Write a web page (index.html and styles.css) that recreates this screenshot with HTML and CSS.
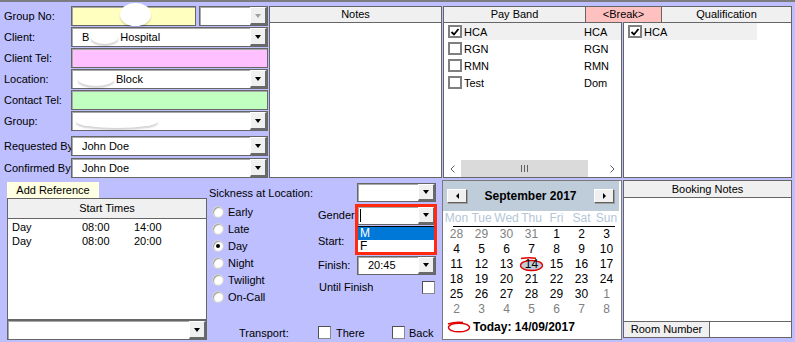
FILE: index.html
```html
<!DOCTYPE html>
<html>
<head>
<meta charset="utf-8">
<link rel="stylesheet" href="styles.css">
</head>
<body>
<div class="win">
  <div class="top">
    <div class="form">
      <div class="frow"><span class="lbl">Group No:</span><div class="field yellow"><span class="blob b1"></span></div><div class="field combo small"><span class="arrow dis"></span></div></div>
      <div class="frow"><span class="lbl">Client:</span><div class="field combo">B<span class="iblob w27"></span>Hospital<span class="arrow"></span></div></div>
      <div class="frow"><span class="lbl">Client Tel:</span><div class="field pink"></div></div>
      <div class="frow"><span class="lbl">Location:</span><div class="field combo"><span class="iblob w36 ml"></span>Block<span class="arrow"></span></div></div>
      <div class="frow"><span class="lbl">Contact Tel:</span><div class="field green"></div></div>
      <div class="frow gap"><span class="lbl">Group:</span><div class="field combo"><span class="iblob w82 ml2"></span><span class="arrow"></span></div></div>
      <div class="frow gap2"><span class="lbl">Requested By</span><div class="field combo">John Doe<span class="arrow"></span></div></div>
      <div class="frow"><span class="lbl">Confirmed By:</span><div class="field combo">John Doe<span class="arrow"></span></div></div>
    </div>
    <div class="panel notes"><div class="ph">Notes</div><div class="pb"></div></div>
    <div class="bands">
      <div class="bhead"><div class="hc pay">Pay Band</div><div class="hc brk">&lt;Break&gt;</div><div class="hc qual">Qualification</div></div>
      <div class="blists">
        <div class="plist">
          <div class="it"><span class="cb on"><svg width="10" height="10" viewBox="0 0 10 10"><path d="M1.5 5 L4 7.5 L8.5 2" fill="none" stroke="#000" stroke-width="1.8"/></svg></span><span class="itx sel"><span class="c1">HCA</span><span>HCA</span></span></div>
          <div class="it"><span class="cb"></span><span class="itx"><span class="c1">RGN</span><span>RGN</span></span></div>
          <div class="it"><span class="cb"></span><span class="itx"><span class="c1">RMN</span><span>RMN</span></span></div>
          <div class="it"><span class="cb"></span><span class="itx"><span class="c1">Test</span><span>Dom</span></span></div>
          <div class="sbar">
            <span class="sbtn"><svg width="5" height="8" viewBox="0 0 5 8"><path d="M4.5 0.5 L1 4 L4.5 7.5" fill="none" stroke="#606060" stroke-width="1"/></svg></span>
            <span class="thumb"><svg width="7" height="7" viewBox="0 0 7 7"><path d="M0.5 0 V7 M3.5 0 V7 M6.5 0 V7" stroke="#606060" stroke-width="1"/></svg></span>
            <span class="track"></span>
            <span class="sbtn"><svg width="5" height="8" viewBox="0 0 5 8"><path d="M0.5 0.5 L4 4 L0.5 7.5" fill="none" stroke="#606060" stroke-width="1"/></svg></span>
          </div>
        </div>
        <div class="qlist">
          <div class="it"><span class="cb on"><svg width="10" height="10" viewBox="0 0 10 10"><path d="M1.5 5 L4 7.5 L8.5 2" fill="none" stroke="#000" stroke-width="1.8"/></svg></span><span class="itx sel qsel">HCA</span></div>
        </div>
      </div>
    </div>
  </div>

  <div class="bottom">
    <div class="lb">
      <div class="addref">Add Reference</div>
      <div class="stpanel">
        <div class="ph2">Start Times</div>
        <div class="strow"><span>Day</span><span>08:00</span><span>14:00</span></div>
        <div class="strow"><span>Day</span><span>08:00</span><span>20:00</span></div>
      </div>
      <div class="field combo full"><span class="arrow"></span></div>
    </div>

    <div class="mid">
      <div class="sick"><span>Sickness at Location:</span><div class="field combo mcombo"><span class="arrow"></span></div></div>
      <div class="opts">
        <div class="radios">
          <div class="rad"><span class="rc"></span>Early</div>
          <div class="rad"><span class="rc"></span>Late</div>
          <div class="rad"><span class="rc on"></span>Day</div>
          <div class="rad"><span class="rc"></span>Night</div>
          <div class="rad"><span class="rc"></span>Twilight</div>
          <div class="rad"><span class="rc"></span>On-Call</div>
        </div>
        <div class="rcol">
          <div class="rrow r-g"><span class="rl">Gender:</span><div class="field combo mcombo gcombo"><span class="caret"></span><span class="arrow"></span>
            <div class="dd"><div class="ddi hl">M</div><div class="ddi">F</div></div></div></div>
          <div class="rrow r-s"><span class="rl">Start:</span></div>
          <div class="rrow r-f"><span class="rl">Finish:</span><div class="field combo mcombo">20:45<span class="arrow"></span></div></div>
          <div class="rrow r-u"><span class="rl2">Until Finish</span><span class="ck"></span></div>
        </div>
      </div>
      <div class="trans"><span class="tl">Transport:</span><span class="tg"><span class="ck"></span>There</span><span class="tg last"><span class="ck"></span>Back</span></div>
      <div class="redbox"></div>
    </div>

    <div class="cal">
      <div class="chead"><span class="nb"><span class="tri l"></span></span><span class="ctitle">September 2017</span><span class="nb"><span class="tri r"></span></span></div>
      <div class="dnames"><span>Mon</span><span>Tue</span><span>Wed</span><span>Thu</span><span>Fri</span><span>Sat</span><span>Sun</span></div>
      <div class="dates">
        <span class="g">28</span><span class="g">29</span><span class="g">30</span><span class="g">31</span><span>1</span><span>2</span><span>3</span>
        <span>4</span><span>5</span><span>6</span><span>7</span><span>8</span><span>9</span><span>10</span>
        <span>11</span><span>12</span><span>13</span><span class="td"><svg class="ring" width="25" height="15" viewBox="0 0 25 15"><ellipse cx="12.5" cy="8.5" rx="11" ry="5" fill="#BFCDDB" stroke="#E00000" stroke-width="1.3"/><path d="M2 1.5 Q9 0.2 17 1.2" fill="none" stroke="#E00000" stroke-width="1.5"/></svg><b>14</b></span><span>15</span><span>16</span><span>17</span>
        <span>18</span><span>19</span><span>20</span><span>21</span><span>22</span><span>23</span><span>24</span>
        <span>25</span><span>26</span><span>27</span><span>28</span><span>29</span><span>30</span><span class="g">1</span>
        <span class="g">2</span><span class="g">3</span><span class="g">4</span><span class="g">5</span><span class="g">6</span><span class="g">7</span><span class="g">8</span>
      </div>
      <div class="today"><svg width="24" height="12" viewBox="0 0 24 12"><ellipse cx="12" cy="6.5" rx="10.5" ry="4.3" fill="none" stroke="#E00000" stroke-width="1.4"/><path d="M1 3 Q8 0.5 16 1.5" fill="none" stroke="#E00000" stroke-width="1.4"/></svg>Today: 14/09/2017</div>
    </div>

    <div class="bn">
      <div class="ph">Booking Notes</div>
      <div class="pb"></div>
      <div class="bnf"><span class="rn">Room Number</span><span class="rv"></span></div>
    </div>
  </div>
</div>
</body>
</html>
```

FILE: styles.css
```css
* { box-sizing: border-box; }
html, body { margin: 0; padding: 0; }
body {
  width: 795px; height: 342px; overflow: hidden;
  background: #BDBFFF;
  font-family: "Liberation Sans", Arial, sans-serif;
  font-size: 11px; color: #000;
}
.win { border-top: 2px solid #7b7b80; height: 342px; }

/* top section */
.top { display: flex; margin-top: 4px; height: 172px; }
.form { width: 269px; padding-left: 4px; flex: none; }
.frow { display: flex; align-items: center; height: 20px; margin-bottom: 1px; }
.frow.gap { margin-bottom: 5px; }
.frow.gap2 { margin-bottom: 2px; }
.lbl { width: 67px; white-space: nowrap; flex: none; }

.field {
  position: relative; height: 20px; width: 197px; flex: none;
  border: 1px solid #666; box-shadow: inset 1px 1px 0 #a8a8a8;
  background: #fff; display: flex; align-items: center; padding-left: 10px;
  white-space: nowrap;
}
.yellow { background: #FFFFC0; width: 125px; }
.small { width: 69px; margin-left: 3px; }
.pink { background: #FFC0FF; }
.green { background: #C0FFC0; }
.combo { padding-right: 0; }
.arrow {
  margin-left: auto; width: 17px; height: 18px; align-self: flex-start; flex: none;
  background: #F0F0F0;
  border-top: 1px solid #fff; border-left: 1px solid #fff;
  border-right: 2px solid #6a6a6a; border-bottom: 2px solid #6a6a6a;
  display: flex; align-items: center; justify-content: center;
}
.arrow::after {
  content: ""; border-left: 3.5px solid transparent; border-right: 3.5px solid transparent;
  border-top: 4px solid #000;
}
.arrow.dis::after { border-top-color: #a0a0a0; }

.blob {
  position: absolute; left: 48px; top: -4px; width: 31px; height: 23px;
  border-radius: 50%; background: #fff; box-shadow: 0 2px 2px rgba(0,0,0,0.15);
}
.iblob {
  display: inline-block; height: 13px; border-radius: 50%; background: #fff;
  box-shadow: 0 2px 2px rgba(0,0,0,0.18); margin: 0 2px; vertical-align: middle;
}
.w27 { width: 27px; }
.w36 { width: 36px; }
.w82 { width: 82px; }
.ml { margin-left: -4px; }
.ml2 { margin-left: -6px; }

.panel { border: 1px solid #666; background: #fff; display: flex; flex-direction: column; }
.notes { width: 173px; height: 172px; flex: none; }
.ph {
  height: 16px; background: #F0F0F0; border-bottom: 1px solid #666;
  text-align: center; line-height: 15px; flex: none;
}
.pb { flex: 1; background: #fff; }

.bands { width: 349px; margin-left: 1px; display: flex; flex-direction: column; flex: none; }
.bhead { display: flex; height: 16px; }
.hc {
  border: 1px solid #666; border-bottom: none; background: #F0F0F0;
  text-align: center; line-height: 15px; flex: none;
}
.pay { width: 143px; }
.brk { width: 75px; background: #FFC0C0; border-left: none; border-right: none; }
.qual { width: 131px; }
.blists { display: flex; gap: 1px; height: 156px; }
.plist, .qlist {
  border: 1px solid #666; background: #fff; display: flex; flex-direction: column; flex: none;
}
.plist { width: 179px; }
.qlist { width: 169px; }
.it { display: flex; align-items: center; height: 17px; padding-left: 4px; }
.cb {
  width: 14px; height: 13px; border: 2px solid #7f7f7f; background: #fff;
  display: flex; align-items: center; justify-content: center; flex: none;
}
.itx { flex: 1; height: 17px; display: flex; align-items: center; padding-left: 2px; }
.sel { background: #F0F0F0; }
.qsel { flex: none; width: 115px; }
.c1 { width: 120px; }

.sbar { margin-top: auto; display: flex; height: 17px; }
.sbtn { width: 17px; display: flex; align-items: center; justify-content: center; background: #fff; }
.thumb { width: 127px; background: #DADADA; display: flex; align-items: center; justify-content: center; }
.track { width: 16px; background: #fff; }

/* bottom section */
.bottom { display: flex; margin-top: 2px; height: 160px; }
.lb { margin-left: 7px; width: 200px; display: flex; flex-direction: column; flex: none; }
.addref {
  width: 92px; height: 16px; margin-top: 2px; background: #FFFFE1;
  text-align: center; line-height: 16px;
}
.stpanel { height: 122px; border: 1px solid #666; background: #fff; }
.ph2 {
  height: 20px; background: #F0F0F0; border-bottom: 1px solid #666;
  text-align: center; line-height: 19px;
}
.strow { display: grid; grid-template-columns: 70px 52px auto; height: 14px; line-height: 14px; padding-left: 4px; }
.ph2 + .strow { margin-top: 1px; }
.full { width: 200px; }

.mid { width: 235px; position: relative; display: flex; flex-direction: column; padding-right: 6px; flex: none; }
.sick { display: flex; align-items: center; justify-content: space-between; margin-top: 3px; height: 19px; padding-left: 2px; }
.mcombo { width: 79px; height: 19px; }
.mcombo .arrow { height: 17px; }
.opts { display: flex; margin-top: 1px; }
.radios { width: 111px; padding-left: 5px; flex: none; }
.rad { display: flex; align-items: center; height: 17px; }
.rc {
  width: 12px; height: 12px; border-radius: 50%; background: #fff; margin-right: 4px;
  border: 1px solid #cfcfcf; box-shadow: inset 1px 1px 1px #9a9a9a;
  display: flex; align-items: center; justify-content: center;
}
.rc.on::after { content: ""; width: 4px; height: 4px; border-radius: 50%; background: #000; }
.rcol { width: 118px; flex: none; }
.rrow { display: flex; align-items: center; height: 20px; }
.r-g { margin-top: 2px; }
.r-s { margin-top: 6px; }
.r-f { margin-top: 4px; }
.r-u { margin-top: 2px; }
.rl { width: 39px; flex: none; white-space: nowrap; }
.rl2 { padding-left: 1px; }
.gcombo { padding-left: 2px; overflow: visible; }
.caret { width: 1px; height: 13px; background: #000; }
.dd {
  position: absolute; left: -1px; top: 19px; width: 78px; z-index: 3;
  border: 1px solid #000; background: #fff;
}
.ddi { height: 13px; line-height: 13px; padding-left: 2px; font-size: 12px; }
.ddi.hl { background: #0078D7; color: #fff; }
.ck {
  width: 13px; height: 13px; background: #fff; flex: none;
  border: 1px solid #8a8a8a; border-top-color: #505050; border-left-color: #505050;
}
.r-u .ck { margin-left: auto; margin-right: 1px; }
.trans { margin-top: auto; display: flex; align-items: center; height: 15px; padding-left: 32px; }
.tl { width: 79px; flex: none; }
.tg { display: flex; align-items: center; gap: 5px; width: 74px; flex: none; }
.tg.last { width: auto; gap: 4px; }
.redbox {
  position: absolute; left: 148px; top: 24px; width: 82px; height: 51px;
  border: 3px solid #FF2A10; z-index: 4;
}

.cal { width: 180px; height: 160px; border: 1px solid #7a7a7a; background: #fff; font-size: 12px; flex: none; }
.chead {
  width: 176px; height: 30px; background: #BFCDDB; display: flex; align-items: center;
  padding: 0 5px 0 4px;
}
.nb {
  width: 20px; height: 14px; background: #F0F0F0;
  border-top: 1px solid #fff; border-left: 1px solid #fff;
  border-right: 1px solid #606060; border-bottom: 1px solid #606060;
  box-shadow: 1px 1px 0 #a0a0a0;
  display: flex; align-items: center; justify-content: center;
}
.tri { width: 0; height: 0; border-top: 3px solid transparent; border-bottom: 3px solid transparent; }
.tri.l { border-right: 3px solid #000; }
.tri.r { border-left: 3px solid #000; }
.ctitle { flex: 1; text-align: center; font-weight: bold; font-size: 12px; }
.dnames {
  display: grid; grid-template-columns: repeat(7, 25px); height: 16px; line-height: 15px;
  margin-left: 1px; color: #B4C6D8; text-align: center;
  background: linear-gradient(#000, #000) 9px 15px / 162px 1px no-repeat;
}
.dates {
  display: grid; grid-template-columns: repeat(7, 25px); grid-auto-rows: 15px;
  line-height: 15px; margin-left: 1px; text-align: center;
}
.dates .g { color: #808080; }
.td { position: relative; }
.td b { position: relative; font-weight: normal; z-index: 1; }
.ring { position: absolute; left: 0; top: 0; }
.today { display: flex; align-items: center; gap: 2px; padding-left: 4px; height: 17px; font-weight: bold; margin-top: 1px; }

.bn {
  margin-left: 1px; width: 169px; height: 158px; border: 1px solid #666; background: #fff;
  display: flex; flex-direction: column; flex: none;
}
.bn .ph { height: 17px; line-height: 16px; }
.bnf { height: 16px; border-top: 1px solid #666; display: flex; flex: none; }
.rn { width: 86px; background: #F0F0F0; border-right: 1px solid #666; text-align: center; line-height: 15px; font-size: 11px; }
.rv { flex: 1; background: #fff; }
```
